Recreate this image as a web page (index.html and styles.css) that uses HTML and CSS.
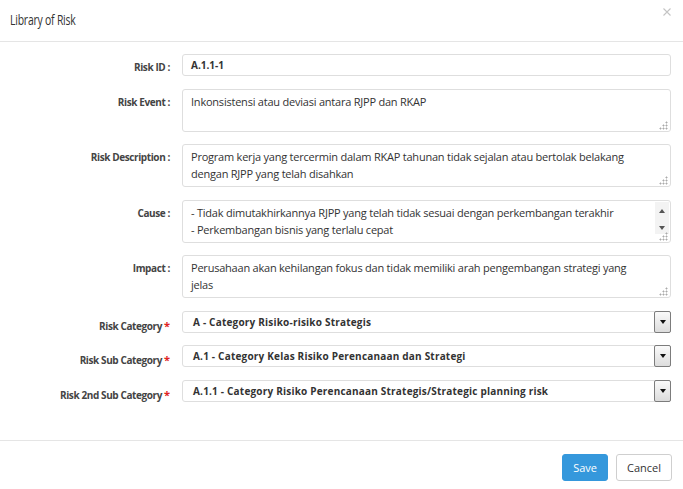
FILE: index.html
```html
<!DOCTYPE html>
<html lang="id">
<head>
<meta charset="utf-8">
<title>Library of Risk</title>
<link rel="stylesheet" href="styles.css">
</head>
<body>
<div class="modal">
  <div class="modal-header">
    <h4 class="modal-title">Library of Risk</h4>
    <button class="close" type="button" aria-label="Close">
      <svg width="8" height="8" viewBox="0 0 8 8"><path d="M0.5 0.5L7.5 7.5M7.5 0.5L0.5 7.5" stroke="#c4c4c4" stroke-width="1.1" fill="none"/></svg>
    </button>
  </div>
  <div class="modal-body">
    <div class="form">
      <label class="label">Risk ID :</label>
      <div class="control input strong">A.1.1-1</div>

      <label class="label">Risk Event :</label>
      <div class="control textarea">Inkonsistensi atau deviasi antara RJPP dan RKAP<span class="grip"></span></div>

      <label class="label">Risk Description :</label>
      <div class="control textarea">Program kerja yang tercermin dalam RKAP tahunan tidak sejalan atau bertolak belakang dengan RJPP yang telah disahkan<span class="grip"></span></div>

      <label class="label">Cause :</label>
      <div class="control textarea scroll">
        <div class="text">- Tidak dimutakhirkannya RJPP yang telah tidak sesuai dengan perkembangan terakhir<br>- Perkembangan bisnis yang terlalu cepat</div>
        <div class="scrollbar"><span class="tri up"></span><span class="tri down"></span></div>
        <span class="grip"></span>
      </div>

      <label class="label">Impact :</label>
      <div class="control textarea">Perusahaan akan kehilangan fokus dan tidak memiliki arah pengembangan strategi yang jelas<span class="grip"></span></div>

      <label class="label sel">Risk Category<span class="req">*</span></label>
      <div class="control select"><span class="value">A - Category Risiko-risiko Strategis</span><span class="arrow"><span class="tri down dark"></span></span></div>

      <label class="label sel">Risk Sub Category<span class="req">*</span></label>
      <div class="control select"><span class="value">A.1 - Category Kelas Risiko Perencanaan dan Strategi</span><span class="arrow"><span class="tri down dark"></span></span></div>

      <label class="label sel">Risk 2nd Sub Category<span class="req">*</span></label>
      <div class="control select"><span class="value">A.1.1 - Category Risiko Perencanaan Strategis/Strategic planning risk</span><span class="arrow"><span class="tri down dark"></span></span></div>
    </div>
  </div>
  <div class="modal-footer">
    <button class="btn btn-save" type="button">Save</button>
    <button class="btn btn-cancel" type="button">Cancel</button>
  </div>
</div>
</body>
</html>
```

FILE: styles.css
```css
* { box-sizing: border-box; }

html, body {
  margin: 0;
  padding: 0;
  background: #fff;
}

body {
  font-family: "Open Sans", "Noto Sans", sans-serif;
  color: #333;
}

.modal {
  width: 683px;
  display: flex;
  flex-direction: column;
}

.modal-header {
  height: 42px;
  border-bottom: 1px solid #e5e5e5;
  display: flex;
  align-items: center;
  justify-content: space-between;
  padding: 0 12px 2px 10px;
}

.modal-title {
  margin: 0;
  font-size: 14.5px;
  font-weight: 400;
  letter-spacing: -0.3px;
  color: #333;
  transform: scaleX(0.72);
  transform-origin: left center;
  white-space: nowrap;
}

.close {
  border: 0;
  background: none;
  padding: 0;
  width: 8px;
  height: 8px;
  align-self: flex-start;
  margin-top: 8px;
  display: flex;
}

.modal-body {
  padding: 12px 12px 38px 0;
}

.form {
  display: grid;
  grid-template-columns: 170px 1fr;
  column-gap: 12px;
  row-gap: 12.5px;
}

.label {
  text-align: right;
  font-size: 10px;
  font-weight: 700;
  letter-spacing: -0.4px;
  color: #444;
  line-height: 17px;
  padding-top: 5px;
  white-space: nowrap;
}

.label.sel {
  height: 22px;
  line-height: 16px;
  padding-top: 7px;
}

.req {
  color: #e02222;
  margin-left: 2px;
  font-size: 11px;
  line-height: 1;
  letter-spacing: 0;
}

.control {
  border: 1px solid #dedede;
  border-radius: 3px;
  background: #fff;
  font-size: 11px;
  letter-spacing: -0.22px;
  line-height: 17px;
  color: #333;
}

.input {
  height: 22px;
  padding: 2px 8px;
}

.strong {
  font-size: 10px;
  font-weight: 700;
  letter-spacing: 0;
}

.textarea {
  position: relative;
  height: 43px;
  padding: 3px 20px 0 8px;
  overflow: hidden;
}

.textarea.scroll {
  display: flex;
  padding-right: 0;
}

.textarea.scroll .text {
  flex: 1;
  padding-right: 8px;
}

.scrollbar {
  width: 14px;
  margin: -2px 1px 8px 0;
  background: #f3f3f3;
  display: flex;
  flex-direction: column;
  align-items: center;
  justify-content: space-between;
  padding: 7px 0 4px;
}

.tri {
  width: 0;
  height: 0;
  border-left: 3px solid transparent;
  border-right: 3px solid transparent;
}

.tri.up {
  border-bottom: 4px solid #555;
}

.tri.down {
  border-top: 4px solid #555;
}

.tri.dark {
  border-left-width: 3.5px;
  border-right-width: 3.5px;
  border-top: 4px solid #111;
}

.grip {
  position: absolute;
  right: 2px;
  bottom: 1px;
  width: 9px;
  height: 9px;
  background:
    radial-gradient(circle at 7.5px 1.5px, #aaa 0.9px, transparent 1.1px),
    radial-gradient(circle at 4.5px 4.5px, #aaa 0.9px, transparent 1.1px),
    radial-gradient(circle at 7.5px 4.5px, #aaa 0.9px, transparent 1.1px),
    radial-gradient(circle at 1.5px 7.5px, #aaa 0.9px, transparent 1.1px),
    radial-gradient(circle at 4.5px 7.5px, #aaa 0.9px, transparent 1.1px),
    radial-gradient(circle at 7.5px 7.5px, #aaa 0.9px, transparent 1.1px);
}

.select {
  height: 22px;
  display: flex;
  align-items: stretch;
  padding-left: 10px;
  font-size: 10px;
  font-weight: 700;
  letter-spacing: 0.2px;
}

.select .value {
  flex: 1;
  line-height: 20px;
}

.select .arrow {
  width: 17px;
  margin: -1px -1px -1px 0;
  border: 1px solid #7c7c7c;
  border-radius: 2px;
  background: linear-gradient(#fafafa, #dcdcdc);
  display: flex;
  align-items: center;
  justify-content: center;
}

.modal-footer {
  border-top: 1px solid #e5e5e5;
  padding: 13px 11px 8px;
  display: flex;
  justify-content: flex-end;
  gap: 8px;
}

.btn {
  font-family: "Open Sans", "Noto Sans", sans-serif;
  font-size: 11px;
  height: 27px;
  padding: 0 10px;
  border-radius: 3px;
  cursor: pointer;
}

.btn-save {
  background: #3598dc;
  border: 1px solid #3598dc;
  color: #fff;
}

.btn-cancel {
  background: #fff;
  border: 1px solid #cfcfcf;
  color: #333;
}
```
